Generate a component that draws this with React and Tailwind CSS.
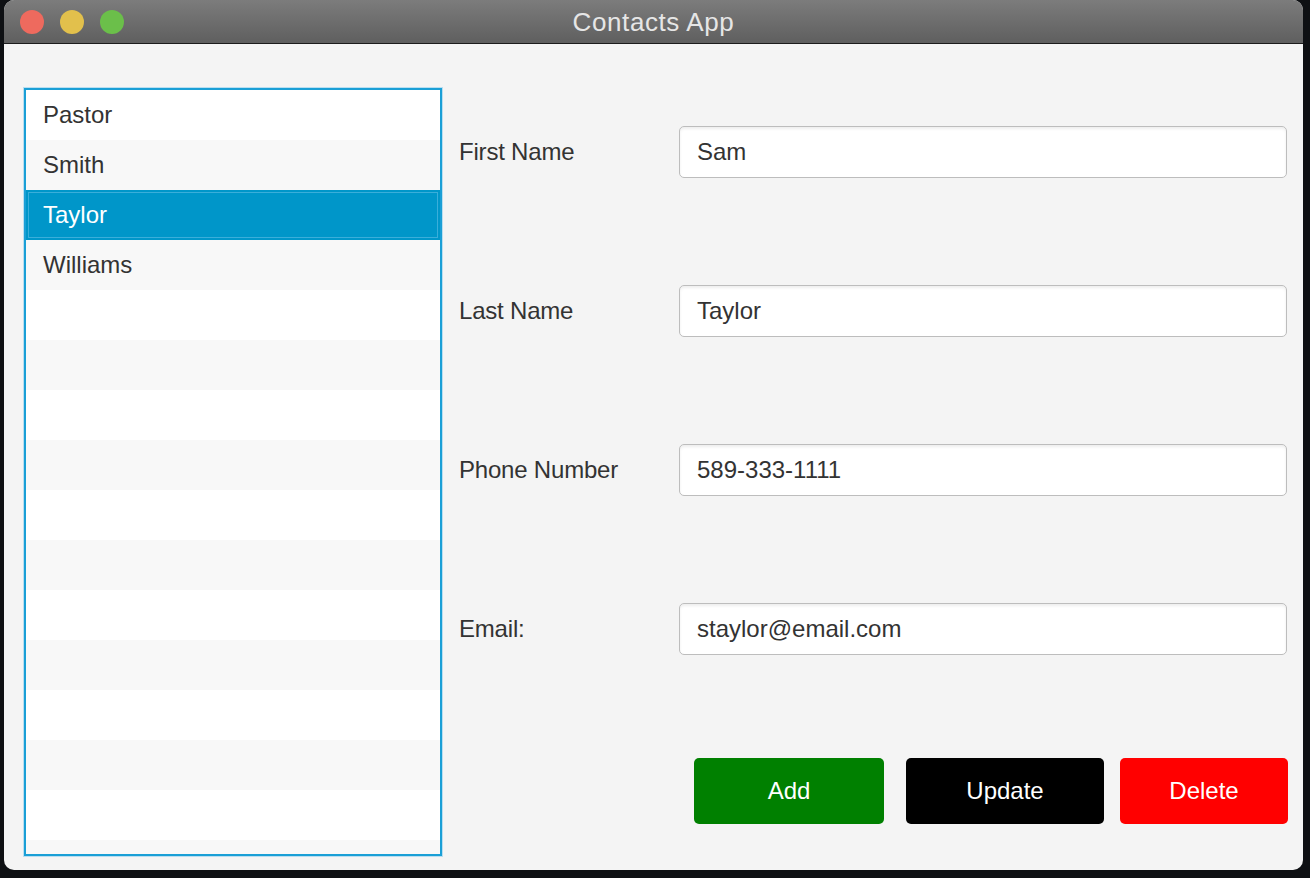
import React from "react";

const contacts = ["Pastor", "Smith", "Taylor", "Williams"];
const fields = [
  { label: "First Name", value: "Sam" },
  { label: "Last Name", value: "Taylor" },
  { label: "Phone Number", value: "589-333-1111" },
  { label: "Email:", value: "staylor@email.com" },
];

export default function App() {
  const rows = Array.from({ length: 16 }, (_, i) => contacts[i] || "");

  return (
    <div className="w-[1310px] h-[878px] bg-[#0e1013] overflow-hidden" style={{ fontFamily: '"Liberation Sans", Arial, sans-serif' }}>
      <div className="ml-[4px] w-[1299px] h-[870px] rounded-[10px] overflow-hidden bg-[#f4f4f4] flex flex-col">
        {/* Title bar */}
        <div className="relative h-[44px] shrink-0 bg-gradient-to-b from-[#7c7c7c] to-[#5f5f5f] border-b border-[#1c1c1c] flex items-center justify-center">
          <div className="absolute left-[16px] top-[10px] flex gap-[16px]">
            <span className="w-[24px] h-[24px] rounded-full bg-[#ee6a5e]" />
            <span className="w-[24px] h-[24px] rounded-full bg-[#e2c04c]" />
            <span className="w-[24px] h-[24px] rounded-full bg-[#6bbf4a]" />
          </div>
          <span className="text-[26px] text-[#e6e6e6] tracking-[0.6px] mt-[2px]">Contacts App</span>
        </div>

        {/* Body */}
        <div className="flex pl-[20px] pr-[15px] pt-[44px]">
          <div className="w-[418px] h-[768px] shrink-0 border-2 border-[#1a9fd6] bg-white overflow-hidden shadow-[0_0_0_1px_#b9def0]">
            {rows.map((name, i) => {
              const selected = name === "Taylor";
              return (
                <div
                  key={i}
                  className={
                    "h-[50px] flex items-center pl-[17px] text-[24px] " +
                    (selected
                      ? "bg-[#0096c9] text-white shadow-[inset_0_0_0_2px_#0096c9,inset_0_0_0_3px_#3aaeda]"
                      : i % 2 === 0
                      ? "bg-white text-[#333]"
                      : "bg-[#f8f8f8] text-[#333]")
                  }
                >
                  {name}
                </div>
              );
            })}
          </div>

          <div className="flex-1 flex flex-col pl-[17px] pt-[38px]">
            <div className="flex flex-col gap-[107px]">
              {fields.map((f) => (
                <div key={f.label} className="flex items-center h-[52px]">
                  <div className="w-[220px] text-[24px] text-[#333] tracking-[-0.2px]">{f.label}</div>
                  <div className="flex-1 h-[52px] mr-[1px] rounded-[5px] border border-[#bdbdbd] bg-white shadow-[inset_0_2px_3px_rgba(0,0,0,0.07)] flex items-center pl-[17px] text-[24px] text-[#333]">
                    {f.value}
                  </div>
                </div>
              ))}
            </div>

            <div className="flex justify-end mt-[103px] gap-[16px]">
              <button className="w-[190px] h-[66px] rounded-[5px] bg-[#008000] text-white text-[24px] mr-[6px]">Add</button>
              <button className="w-[198px] h-[66px] rounded-[5px] bg-black text-white text-[24px]">Update</button>
              <button className="w-[168px] h-[66px] rounded-[5px] bg-[#ff0000] text-white text-[24px]">Delete</button>
            </div>
          </div>
        </div>
      </div>
    </div>
  );
}
